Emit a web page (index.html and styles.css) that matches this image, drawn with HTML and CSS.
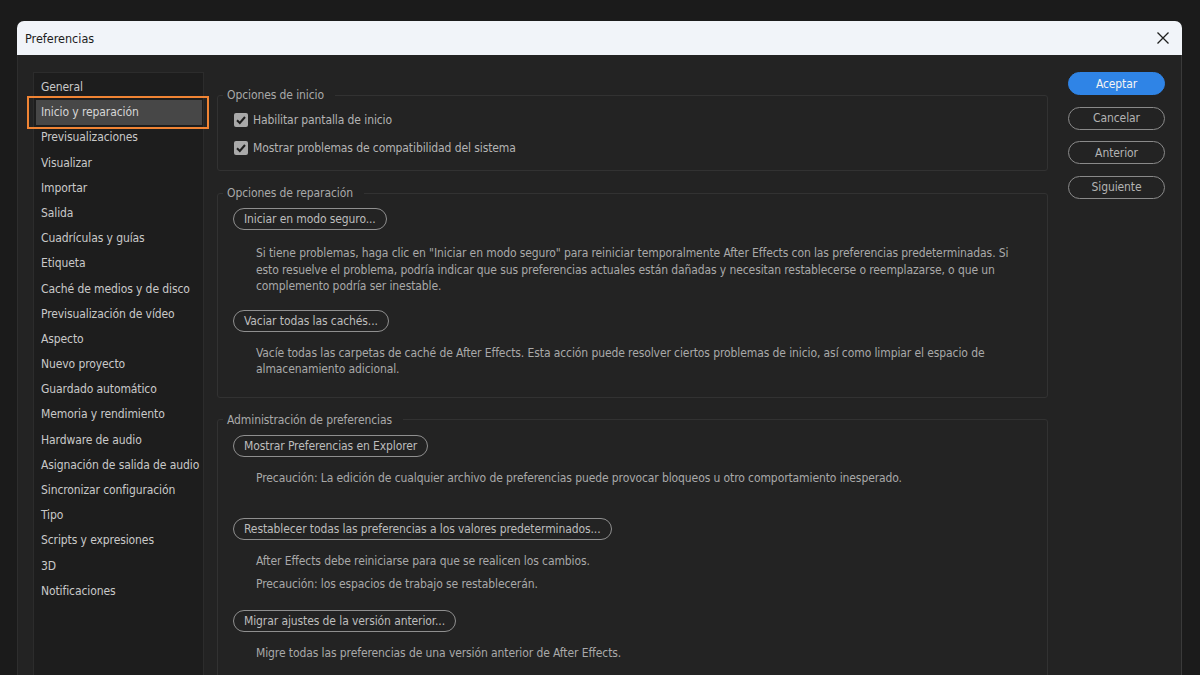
FILE: index.html
```html
<!DOCTYPE html>
<html lang="es">
<head>
    <meta charset="UTF-8">
    <title>Preferencias</title>
    <link rel="stylesheet" href="styles.css">
</head>
<body>
    <div class="dialog">
        <div class="titlebar">
            <div class="title">Preferencias</div>
            <svg class="close" width="14" height="14" viewBox="0 0 14 14">
                <path d="M1.5 1.5 L12.5 12.5 M12.5 1.5 L1.5 12.5" stroke="#1f1f1f" stroke-width="1.3" fill="none"/>
            </svg>
        </div>

        <div class="dialog-body">
            <ul class="nav">
                <li>General</li>
                <li class="selected">Inicio y reparación<span class="marker"></span></li>
                <li>Previsualizaciones</li>
                <li>Visualizar</li>
                <li>Importar</li>
                <li>Salida</li>
                <li>Cuadrículas y guías</li>
                <li>Etiqueta</li>
                <li>Caché de medios y de disco</li>
                <li>Previsualización de vídeo</li>
                <li>Aspecto</li>
                <li>Nuevo proyecto</li>
                <li>Guardado automático</li>
                <li>Memoria y rendimiento</li>
                <li>Hardware de audio</li>
                <li>Asignación de salida de audio</li>
                <li>Sincronizar configuración</li>
                <li>Tipo</li>
                <li>Scripts y expresiones</li>
                <li>3D</li>
                <li>Notificaciones</li>
            </ul>

            <div class="content">
                <fieldset class="group group-start">
                    <legend>Opciones de inicio</legend>
                    <div class="check-row"><span class="checkbox"><svg width="14" height="14" viewBox="0 0 14 14"><path d="M3 7.2 L5.8 10 L11 4" stroke="#1e1e1e" stroke-width="2" fill="none"/></svg></span>Habilitar pantalla de inicio</div>
                    <div class="check-row"><span class="checkbox"><svg width="14" height="14" viewBox="0 0 14 14"><path d="M3 7.2 L5.8 10 L11 4" stroke="#1e1e1e" stroke-width="2" fill="none"/></svg></span>Mostrar problemas de compatibilidad del sistema</div>
                </fieldset>

                <fieldset class="group">
                    <legend>Opciones de reparación</legend>
                    <div class="btn">Iniciar en modo seguro...</div>
                    <p class="desc desc-first">Si tiene problemas, haga clic en "Iniciar en modo seguro" para reiniciar temporalmente After Effects con las preferencias predeterminadas. Si esto resuelve el problema, podría indicar que sus preferencias actuales están dañadas y necesitan restablecerse o reemplazarse, o que un complemento podría ser inestable.</p>
                    <div class="btn">Vaciar todas las cachés...</div>
                    <p class="desc">Vacíe todas las carpetas de caché de After Effects. Esta acción puede resolver ciertos problemas de inicio, así como limpiar el espacio de almacenamiento adicional.</p>
                </fieldset>

                <fieldset class="group">
                    <legend>Administración de preferencias</legend>
                    <div class="btn">Mostrar Preferencias en Explorer</div>
                    <p class="desc">Precaución: La edición de cualquier archivo de preferencias puede provocar bloqueos u otro comportamiento inesperado.</p>
                    <div class="btn btn-spaced">Restablecer todas las preferencias a los valores predeterminados...</div>
                    <p class="desc">After Effects debe reiniciarse para que se realicen los cambios.</p>
                    <p class="desc desc-next">Precaución: los espacios de trabajo se restablecerán.</p>
                    <div class="btn btn-mid">Migrar ajustes de la versión anterior...</div>
                    <p class="desc">Migre todas las preferencias de una versión anterior de After Effects.</p>
                </fieldset>
            </div>

            <div class="actions">
                <div class="action primary">Aceptar</div>
                <div class="action">Cancelar</div>
                <div class="action">Anterior</div>
                <div class="action">Siguiente</div>
            </div>
        </div>
    </div>
</body>
</html>
```

FILE: styles.css
```css
* {
    margin: 0;
    padding: 0;
    box-sizing: border-box;
}

body {
    background-color: #1b1b1b;
    font-family: "DejaVu Sans Condensed", "Liberation Sans", sans-serif;
    font-size: 12px;
    letter-spacing: -0.1px;
    height: 675px;
    overflow: hidden;
    padding: 21px 0 0 17px;
}

.dialog {
    width: 1165px;
    height: 720px;
    background-color: #232323;
    border-radius: 7px 7px 0 0;
    border-left: 1px solid #2e2e2e;
    border-right: 1px solid #3a3a3a;
}

.titlebar {
    height: 34px;
    background-color: #f1f4f9;
    border-radius: 7px 7px 0 0;
    display: flex;
    align-items: center;
    justify-content: space-between;
    padding: 0 12px 0 8px;
    margin: 0 -1px;
}

.title {
    color: #1c1c1c;
    font-size: 12.5px;
    letter-spacing: 0;
}

.dialog-body {
    display: flex;
    align-items: flex-start;
    padding: 17px 0 0 15px;
}

/* category list */
.nav {
    list-style: none;
    width: 171px;
    height: 640px;
    background-color: #1d1d1d;
    border: 1px solid #2c2c2c;
    padding: 2px 1px 0 2px;
}

.nav li {
    height: 25.2px;
    line-height: 25.2px;
    padding-left: 5px;
    color: #c9c9c9;
    white-space: nowrap;
}

.nav li.selected {
    position: relative;
    background-color: #474747;
    color: #d6d6d6;
}

.marker {
    position: absolute;
    left: -9px;
    top: -4px;
    right: -7px;
    bottom: -4px;
    border: 2px solid #f08434;
}

/* option groups */
.content {
    width: 831px;
    margin-left: 13px;
    padding-top: 15px;
}

.group {
    border: 1px solid #323232;
    border-radius: 3px;
    padding: 0 14px 19px 15px;
    margin-bottom: 14px;
}

.group-start {
    padding-bottom: 8px;
}

.group legend {
    line-height: 16px;
    padding: 0 11px 0 4px;
    margin-left: -10px;
    color: #a9a9a9;
}

.check-row {
    display: flex;
    align-items: center;
    height: 28px;
    color: #b4b4b4;
}

.group .check-row:first-of-type {
    margin-top: 3px;
}

.checkbox {
    width: 14px;
    height: 14px;
    margin: 0 5px 0 1px;
    border-radius: 2px;
    background-color: #a9a9a9;
    display: flex;
}

.btn {
    display: inline-flex;
    align-items: center;
    height: 22px;
    padding: 0 10px;
    border: 1.5px solid #8f8f8f;
    border-radius: 11px;
    color: #bdbdbd;
    margin-top: 7px;
}

.desc + .btn {
    margin-top: 15px;
}

.desc + .btn.btn-spaced {
    margin-top: 31px;
}

.desc + .btn.btn-mid {
    margin-top: 18px;
}

.desc {
    color: #a9a9a9;
    line-height: 16.6px;
    margin-top: 13px;
    padding-left: 23px;
    padding-right: 20px;
}

.desc-first {
    margin-top: 15px;
}

.desc + .desc-next {
    margin-top: 6.5px;
}

/* dialog buttons */
.actions {
    width: 97px;
    margin-left: 20px;
    display: flex;
    flex-direction: column;
    gap: 11.5px;
}

.action {
    height: 23px;
    border: 1.5px solid #8a8a8a;
    border-radius: 12px;
    color: #b3b3b3;
    display: flex;
    align-items: center;
    justify-content: center;
}

.action.primary {
    background-color: #2f84e6;
    border-color: #2f84e6;
    color: #f4f4f4;
}
```
